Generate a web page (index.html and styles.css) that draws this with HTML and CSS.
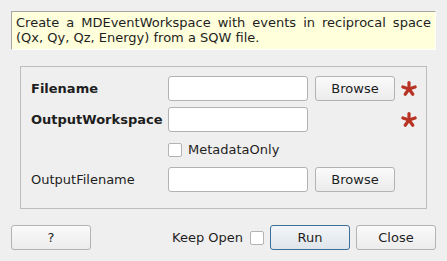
FILE: index.html
```html
<!DOCTYPE html>
<html lang="en">
<head>
    <meta charset="UTF-8">
    <title>LoadSQW</title>
    <link rel="stylesheet" href="styles.css">
</head>
<body>
    <div class="dialog">
        <p class="summary">Create a MDEventWorkspace with events in reciprocal space (Qx, Qy, Qz, Energy) from a SQW file.</p>

        <div class="props">
            <label class="prop-label mandatory">Filename</label>
            <input type="text" class="prop-input">
            <button class="btn">Browse</button>
            <svg class="star" viewBox="0 0 16 16"><use href="#star"/></svg>

            <label class="prop-label mandatory">OutputWorkspace</label>
            <input type="text" class="prop-input">
            <span></span>
            <svg class="star" viewBox="0 0 16 16"><use href="#star"/></svg>

            <span></span>
            <label class="check-row"><span class="check"></span>MetadataOnly</label>
            <span></span>
            <span></span>

            <label class="prop-label">OutputFilename</label>
            <input type="text" class="prop-input">
            <button class="btn">Browse</button>
            <span></span>
        </div>

        <div class="footer">
            <button class="btn btn-help">?</button>
            <label class="keep-open">Keep Open <span class="check"></span></label>
            <button class="btn btn-default">Run</button>
            <button class="btn">Close</button>
        </div>
    </div>

    <svg width="0" height="0" class="defs">
        <defs>
            <g id="star" stroke="#b83324" stroke-width="3.2" stroke-linecap="round">
                <line x1="8" y1="8" x2="8" y2="1.6"/>
                <line x1="8" y1="8" x2="14.1" y2="6"/>
                <line x1="8" y1="8" x2="11.8" y2="13.2"/>
                <line x1="8" y1="8" x2="4.2" y2="13.2"/>
                <line x1="8" y1="8" x2="1.9" y2="6"/>
            </g>
        </defs>
    </svg>
</body>
</html>
```

FILE: styles.css
```css
* {
    box-sizing: border-box;
    margin: 0;
    padding: 0;
}

body {
    background: #efefef;
    font-family: "DejaVu Sans", sans-serif;
    font-size: 13px;
    color: #1e1e1e;
}

.dialog {
    width: 447px;
    height: 261px;
    padding: 11px 11px 0 11px;
}

.summary {
    background: #ffffdc;
    border-top: 1px solid #a6a6a6;
    border-left: 1px solid #a6a6a6;
    border-right: 1px solid #ffffff;
    border-bottom: 1px solid #ffffff;
    padding: 3px 4px 4px 4px;
    line-height: 15px;
    text-align: justify;
    height: 39px;
}

.props {
    margin: 16px 9px 0 9px;
    border: 1px solid #bdbdbd;
    height: 143px;
    padding: 9px 0 0 10px;
    display: grid;
    grid-template-columns: 137px 140px 87px 22px;
    grid-template-rows: 25px 25px 23px 25px;
    row-gap: 6px;
    align-items: center;
}

.prop-label {
    white-space: nowrap;
}

.prop-label.mandatory {
    font-weight: bold;
}

.prop-input {
    height: 25px;
    width: 140px;
    border: 1px solid #b3b3b3;
    border-radius: 3px;
    background: #ffffff;
    font: inherit;
}

.btn {
    font: inherit;
    color: #1e1e1e;
    height: 25px;
    width: 80px;
    border: 1px solid #b3b3b3;
    border-radius: 3px;
    background: linear-gradient(#fafafa, #ececec);
}

.props .btn {
    margin-left: 7px;
}

.star {
    width: 16px;
    height: 16px;
    margin-left: 6px;
}

.check-row {
    display: flex;
    align-items: center;
    gap: 6px;
    white-space: nowrap;
}

.check {
    display: inline-block;
    width: 14px;
    height: 14px;
    border: 1px solid #b3b3b3;
    border-radius: 2px;
    background: #ffffff;
}

.footer {
    margin-top: 16px;
    display: flex;
    align-items: center;
}

.btn-help {
    margin-right: auto;
}

.keep-open {
    display: flex;
    align-items: center;
    gap: 7px;
    margin-right: 6px;
}

.btn-default {
    border-color: #3c6e9a;
    background: linear-gradient(#f2f5f8, #dfe5ea);
    margin-right: 6px;
}

.defs {
    position: absolute;
}
```
